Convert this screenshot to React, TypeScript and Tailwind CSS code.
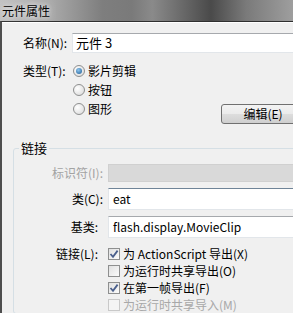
function Radio({ checked }: { checked?: boolean }) {
  return (
    <span className="w-[12px] h-[12px] rounded-full border border-[#8e8f8f] bg-[radial-gradient(circle_at_35%_35%,#ffffff,#d6d6d6)] flex items-center justify-center shrink-0">
      {checked && <span className="w-[6px] h-[6px] rounded-full bg-[radial-gradient(circle_at_40%_35%,#8fc6ee,#1a5a94)]" />}
    </span>
  );
}

function Check({ checked, disabled }: { checked?: boolean; disabled?: boolean }) {
  return (
    <span
      className={
        disabled
          ? "w-[12px] h-[12px] border border-[#c9c9c9] bg-[#f4f4f4] shrink-0"
          : "w-[12px] h-[12px] border border-[#8e8f8f] bg-[linear-gradient(135deg,#e0e0e0,#fbfbfb)] shrink-0 flex items-center justify-center"
      }
    >
      {checked && (
        <svg width="10" height="10" viewBox="0 0 10 10">
          <path d="M1.5 5 L4 7.8 L8.6 1.6" fill="none" stroke="#4a5f8c" strokeWidth="1.8" />
        </svg>
      )}
    </span>
  );
}

export default function App() {
  return (
    <div className="w-[293px] h-[313px] overflow-hidden bg-[#f0f0f0] text-[12px] leading-[14px] text-black font-['Noto_Sans_CJK_SC',sans-serif]">
      {/* title bar */}
      <div className="h-[21px] flex items-center pl-[2px] bg-[linear-gradient(90deg,#c2c2c2_0%,#a8a8a8_18%,#7e7e7e_35%,#7a7a7a_45%,#8a8a8a_52%,#4a4a4a_72%,#7a7a7a_84%,#9e9e9e_100%)]">
        <span className="text-[12px] [text-shadow:0_0_4px_#e8e8e8,0_0_8px_#e8e8e8]">元件属性</span>
      </div>

      <div className="h-full border-t border-[#2f2f2f] border-l-2 border-l-[#4e4e4e]">
        <div className="h-full border-t border-white">
          {/* name */}
          <div className="flex items-center mt-[10px] pl-[21px]">
            <span className="w-[49px]">名称(N):</span>
            <div className="flex-1 -mr-[10px] h-[20px] bg-white border border-[#e2e6ea] border-t-[#a6a9ad] flex items-center px-[3px] text-[13px]">
              元件 3
            </div>
          </div>

          {/* type */}
          <div className="flex mt-[8px] pl-[21px]">
            <span className="w-[49px] h-[19px] flex items-center">类型(T):</span>
            <div className="flex-1 flex flex-col">
              <div className="h-[19px] flex items-center gap-[3px] pl-[1px]">
                <Radio checked />
                影片剪辑
              </div>
              <div className="h-[19px] flex items-center gap-[3px] pl-[1px]">
                <Radio />
                按钮
              </div>
              <div className="flex items-start">
                <div className="h-[19px] flex items-center gap-[3px] pl-[1px]">
                  <Radio />
                  图形
                </div>
                <button className="ml-auto -mr-[12px] mt-[5px] w-[84px] shrink-0 h-[20px] border border-[#707070] rounded-[3px] bg-[linear-gradient(#f3f3f3_0%,#ebebeb_48%,#dddddd_52%,#cfcfcf_100%)] text-[12px] px-0">
                  编辑(E)
                </button>
              </div>
            </div>
          </div>

          {/* linkage group */}
          <fieldset className="mt-[17px] ml-[11px] -mr-[10px] border border-[#d5dfe5] rounded-[3px] pt-[9px]">
            <legend className="ml-[5px] px-[2px] leading-[14px] text-[13px]">链接</legend>
            <div className="flex flex-col">
              <div className="flex items-center">
                <span className="w-[94px] pr-[5px] text-right text-[#a3a3a3]">标识符(I):</span>
                <div className="flex-1 h-[18px] bg-[#d9d9d9] border border-[#d0d0d0]" />
              </div>
              <div className="flex items-center mt-[6px]">
                <span className="w-[94px] pr-[5px] text-right">类(C):</span>
                <div className="flex-1 h-[22px] bg-white border border-[#e2e6ea] border-t-[#6f8498] flex items-center px-[4px]">eat</div>
              </div>
              <div className="flex items-center mt-[6px]">
                <span className="w-[94px] pr-[10px] text-right">基类:</span>
                <div className="flex-1 h-[22px] bg-white border border-[#e2e6ea] border-t-[#a6a9ad] flex items-center px-[4px]">flash.display.MovieClip</div>
              </div>
              <div className="flex mt-[7px]">
                <span className="w-[94px] pr-[10px] text-right h-[17px] flex items-center justify-end">链接(L):</span>
                <div className="flex flex-col">
                  <div className="h-[17px] flex items-center gap-[3px]">
                    <Check checked />
                    为 ActionScript 导出(X)
                  </div>
                  <div className="h-[17px] flex items-center gap-[3px]">
                    <Check />
                    为运行时共享导出(O)
                  </div>
                  <div className="h-[17px] flex items-center gap-[3px]">
                    <Check checked />
                    在第一帧导出(F)
                  </div>
                  <div className="h-[17px] flex items-center gap-[3px] text-[#a8a8a8]">
                    <Check disabled />
                    为运行时共享导入(M)
                  </div>
                </div>
              </div>
            </div>
          </fieldset>
        </div>
      </div>
    </div>
  );
}
